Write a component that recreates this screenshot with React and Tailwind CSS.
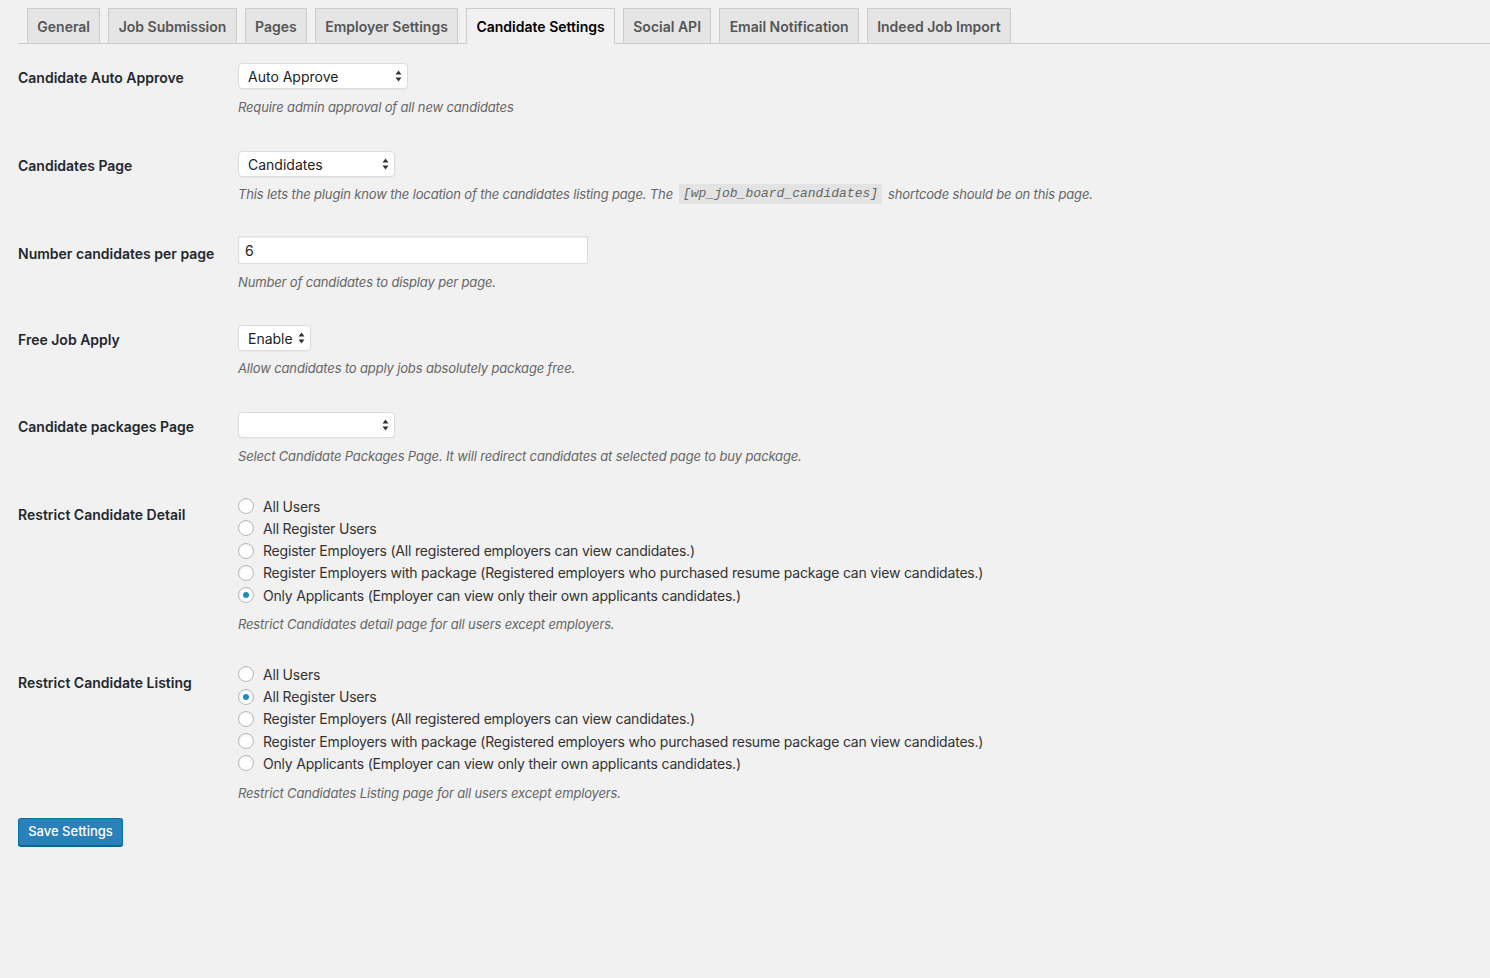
import React from 'react';

const tabs = ['General', 'Job Submission', 'Pages', 'Employer Settings', 'Candidate Settings', 'Social API', 'Email Notification', 'Indeed Job Import'];

const restrictOptions = [
  'All Users',
  'All Register Users',
  'Register Employers (All registered employers can view candidates.)',
  'Register Employers with package (Registered employers who purchased resume package can view candidates.)',
  'Only Applicants (Employer can view only their own applicants candidates.)',
];

function Arrows() {
  return (
    <svg width="7" height="12" viewBox="0 0 7 12" className="shrink-0">
      <path d="M3.5 0.5 L6.5 4.5 L0.5 4.5 Z" fill="#333" />
      <path d="M3.5 11.5 L6.5 7.5 L0.5 7.5 Z" fill="#333" />
    </svg>
  );
}

function Select({ value, width }) {
  return (
    <div className={`flex h-[26px] items-center justify-between rounded-[4px] border border-[#dcdcdc] bg-white pl-[9px] pr-[5px] text-[14px] text-[#222] shadow-[0_1px_1px_rgba(0,0,0,0.04)] ${width}`}>
      <span>{value}</span>
      <Arrows />
    </div>
  );
}

function Desc({ children, className = '' }) {
  return <p className={`text-[13px] italic leading-[18px] tracking-[-0.15px] text-[#666] ${className}`}>{children}</p>;
}

function Radio({ checked, label }) {
  return (
    <label className="flex h-[22.25px] items-center gap-[9px] text-[14px] tracking-[-0.2px] text-[#333]">
      <span className="flex h-[16px] w-[16px] items-center justify-center rounded-full border border-[#b4b9be] bg-white shadow-[inset_0_1px_2px_rgba(0,0,0,0.07)]">
        {checked && <span className="h-[6px] w-[6px] rounded-full bg-[#1e8cbe]" />}
      </span>
      <span>{label}</span>
    </label>
  );
}

function Row({ label, labelTop, className = '', children }) {
  return (
    <div className={`flex ${className}`}>
      <div className={`w-[220px] shrink-0 text-[14px] font-semibold leading-[20px] text-[#23282d] ${labelTop}`}>{label}</div>
      <div className="flex-1">{children}</div>
    </div>
  );
}

export default function App() {
  return (
    <div className="min-h-[978px] bg-[#f1f1f1] pl-[18px] pt-[8px] font-['Inter','Noto_Sans',sans-serif]">
      {/* Tabs */}
      <div className="flex gap-[8px] border-b border-[#ccc] pl-[9px]">
        {tabs.map(t => (
          <div
            key={t}
            className={`-mb-px flex h-[36px] items-center border border-[#ccc] px-[9.3px] text-[14px] font-semibold ${
              t === 'Candidate Settings' ? 'border-b-[#f1f1f1] bg-[#f1f1f1] text-black' : 'bg-[#e5e5e5] text-[#555]'
            }`}
          >
            {t}
          </div>
        ))}
      </div>

      <div className="pt-[19px]">
        <Row label="Candidate Auto Approve" labelTop="mt-[5px]" className="mb-[35px]">
          <Select value="Auto Approve" width="w-[170px]" />
          <Desc className="mt-[9px]">Require admin approval of all new candidates</Desc>
        </Row>

        <Row label="Candidates Page" labelTop="mt-[5px]" className="mb-[32px]">
          <Select value="Candidates" width="w-[157px]" />
          <Desc className="mt-[7px] flex items-center">
            <span>This lets the plugin know the location of the candidates listing page. The</span>
            <code className="mx-[6px] bg-[#e3e3e3] px-[4px] font-['Liberation_Mono',monospace] text-[13px] italic leading-[20px] tracking-normal">[wp_job_board_candidates]</code>
            <span>shortcode should be on this page.</span>
          </Desc>
        </Row>

        <Row label="Number candidates per page" labelTop="mt-[8px]" className="mb-[34px]">
          <div className="flex h-[28px] w-[350px] items-center border border-[#ddd] bg-white pl-[6px] text-[14px] text-[#222] shadow-[inset_0_1px_2px_rgba(0,0,0,0.07)]">6</div>
          <Desc className="mt-[9px]">Number of candidates to display per page.</Desc>
        </Row>

        <Row label="Free Job Apply" labelTop="mt-[5px]" className="mb-[35px]">
          <Select value="Enable" width="w-[73px]" />
          <Desc className="mt-[8px]">Allow candidates to apply jobs absolutely package free.</Desc>
        </Row>

        <Row label="Candidate packages Page" labelTop="mt-[5px]" className="mb-[30px]">
          <Select value="" width="w-[157px]" />
          <Desc className="mt-[9px]">Select Candidate Packages Page. It will redirect candidates at selected page to buy package.</Desc>
        </Row>

        <Row label="Restrict Candidate Detail" labelTop="mt-[10px]" className="mb-[30px]">
          {restrictOptions.map((o, i) => <Radio key={o} label={o} checked={i === 4} />)}
          <Desc className="mt-[9px]">Restrict Candidates detail page for all users except employers.</Desc>
        </Row>

        <Row label="Restrict Candidate Listing" labelTop="mt-[10px]">
          {restrictOptions.map((o, i) => <Radio key={o} label={o} checked={i === 1} />)}
          <Desc className="mt-[9px]">Restrict Candidates Listing page for all users except employers.</Desc>
        </Row>

        <button className="mt-[16px] h-[28px] w-[105px] rounded-[3px] border border-[#0073aa] border-b-[#006799] bg-[#2a80b9] text-[13px] font-medium text-white shadow-[0_1px_0_#006799]">
          Save Settings
        </button>
      </div>
    </div>
  );
}
